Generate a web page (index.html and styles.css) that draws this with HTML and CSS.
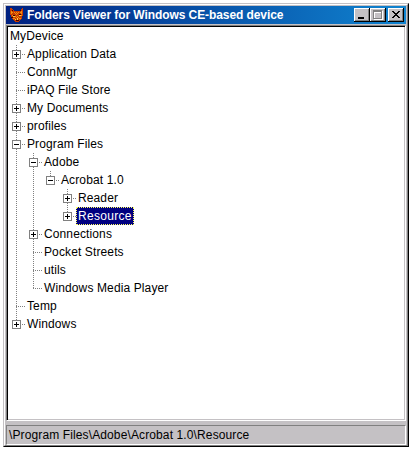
FILE: index.html
```html
<!DOCTYPE html>
<html lang="en">
<head>
<meta charset="utf-8">
<title>Folders Viewer for Windows CE-based device</title>
<link rel="stylesheet" href="styles.css">
</head>
<body>
<main class="window">
  <div class="frame">
    <header class="titlebar">
      <svg class="fox" width="16" height="16" viewBox="0 0 16 16" shape-rendering="crispEdges">
        <path fill="#c83c00" d="M1 1h1l3 3h5l3-3h1v7l-1 2v1l-3 4H6l-3-4H2V9L1 7z"/>
        <path fill="#f09010" d="M2 4h1v1h1v1H3v1H2zM12 4h1v3h-1V6h-1V5h1zM5 5h1v1H5zM7 5h1v1H7zM9 5h1v1H9zM6 6h1v1H6zM8 6h1v1H8zM7 7h1v1H7zM3 8h1v1H3zM12 8h1v1h-1zM6 9h1v1H6zM8 9h1v1H8zM7 10h1v1H7zM9 10h1v1H9zM4 11h2v1H4zM10 11h2v1h-2z"/>
        <path fill="#ffd040" d="M4 9h2v1H4zM10 8h2v1h-2zM8 11h1v2H8zM6 12h1v1H6z"/>
        <path fill="#400000" d="M4 8h2v1H4zM10 7h2v1h-2zM7 13h3v1H7zM2 10h2v1H2zM3 3h1v1H3zM11 3h1v1h-1z"/>
      </svg>
      <h1 class="title">Folders Viewer for Windows CE-based device</h1>
      <div class="controls">
        <button class="control" aria-label="Minimize"><svg width="16" height="14" shape-rendering="crispEdges"><path d="M4 9h6v2H4z"/></svg></button>
        <button class="control" aria-label="Maximize"><svg width="16" height="14" shape-rendering="crispEdges"><path fill="#fff" d="M4 3h9v9H4z"/><path fill="#808080" d="M3 2h9v9H3z"/><path fill="#fff" d="M4 4h7v6H4z"/><path fill="#c4c1c4" d="M5 5h6v5H5z"/></svg></button>
        <button class="control close" aria-label="Close"><svg width="16" height="14" shape-rendering="crispEdges"><path d="M4 3h2v1h1v1h2V4h1V3h2v1h-1v1h-1v1H9v1h1v1h1v1h1v1h-2V9H9V8H7v1H6v1H4V9h1V8h1V7h1V6H6V5H5V4H4z"/></svg></button>
      </div>
    </header>
    <section class="view">
      <div class="root">MyDevice</div>
      <ul class="tree">
        <li><div class="row"><i class="box plus"></i><span>Application Data</span></div></li>
        <li><div class="row leaf"><span>ConnMgr</span></div></li>
        <li><div class="row leaf"><span>iPAQ File Store</span></div></li>
        <li><div class="row"><i class="box plus"></i><span>My Documents</span></div></li>
        <li><div class="row"><i class="box plus"></i><span>profiles</span></div></li>
        <li><div class="row"><i class="box"></i><span>Program Files</span></div>
          <ul>
            <li><div class="row"><i class="box"></i><span>Adobe</span></div>
              <ul>
                <li><div class="row"><i class="box"></i><span>Acrobat 1.0</span></div>
                  <ul>
                    <li><div class="row"><i class="box plus"></i><span>Reader</span></div></li>
                    <li><div class="row"><i class="box plus"></i><span class="selected">Resource</span></div></li>
                  </ul>
                </li>
              </ul>
            </li>
            <li><div class="row"><i class="box plus"></i><span>Connections</span></div></li>
            <li><div class="row leaf"><span>Pocket Streets</span></div></li>
            <li><div class="row leaf"><span>utils</span></div></li>
            <li><div class="row leaf"><span>Windows Media Player</span></div></li>
          </ul>
        </li>
        <li><div class="row leaf"><span>Temp</span></div></li>
        <li><div class="row"><i class="box plus"></i><span>Windows</span></div></li>
      </ul>
    </section>
    <footer class="status">\Program Files\Adobe\Acrobat 1.0\Resource</footer>
  </div>
</main>
</body>
</html>
```

FILE: styles.css
```css
* { box-sizing: border-box; }
body {
  margin: 0;
  background: #fff;
  color: #000;
  font: 12px/18px "Liberation Sans", Arial, sans-serif;
  letter-spacing: 0.12px;
}
.window {
  width: 406px;
  height: 444px;
  margin: 3px;
  border: 1px solid;
  border-color: #c4c1c4 #000 #000 #c4c1c4;
  background: #c4c1c4;
}
.frame {
  height: 100%;
  display: flex;
  flex-direction: column;
  border: 1px solid;
  border-color: #fff #808080 #808080 #fff;
  padding: 1px;
}
.titlebar {
  height: 18px;
  flex: none;
  display: flex;
  align-items: center;
  padding: 0 2px 0 3px;
  background: linear-gradient(90deg, #002080, #1084d0);
  color: #fff;
}
.fox { flex: none; }
.title {
  flex: 1;
  margin: 0 0 0 2px;
  font-size: 12px;
  line-height: 18px;
  letter-spacing: -0.08px;
  white-space: nowrap;
}
.controls { display: flex; }
.control {
  width: 16px;
  height: 14px;
  padding: 0;
  border: 0;
  background: #c4c1c4;
  box-shadow: inset -1px -1px #000, inset 1px 1px #fff, inset -2px -2px #808080;
}
.control svg { display: block; }
.close { margin-left: 2px; }
.view {
  height: 396px;
  flex: none;
  background: #fff;
  border: 1px solid;
  border-color: #808080 #fff #fff #808080;
  box-shadow: inset 1px 1px #000, inset -1px -1px #c4c1c4;
  margin: 1px 0 4px;
  padding: 1px 0 0 1px;
}
.root { padding-left: 2px; }
ul { list-style: none; margin: 0; padding: 0; }
.tree { padding-left: 4px; }
ul ul { padding-left: 17px; }
li {
  background: repeating-linear-gradient(#808080 0 1px, transparent 1px 2px) 4px 0 / 1px 100% no-repeat;
}
li:last-child { background-size: 1px 9px; }
.row {
  height: 18px;
  display: flex;
  align-items: center;
  white-space: nowrap;
  background: repeating-linear-gradient(90deg, #808080 0 1px, transparent 1px 2px) 4px 9px / 9px 1px no-repeat;
}
.leaf { padding-left: 9px; }
.row span { margin-left: 4px; padding: 0 2px; line-height: 16px; }
.box {
  width: 9px;
  height: 9px;
  flex: none;
  margin-top: 1px;
  border: 1px solid #808080;
  background: linear-gradient(#000, #000) 1px 3px / 5px 1px no-repeat, #fff;
}
.plus {
  background: linear-gradient(#000, #000) 1px 3px / 5px 1px no-repeat,
    linear-gradient(#000, #000) 3px 1px / 1px 5px no-repeat, #fff;
}
.row .selected {
  width: 58px;
  height: 18px;
  line-height: 16px;
  padding: 0 0 0 1px;
  letter-spacing: 0.3px;
  color: #fff;
  background: #000080;
  border: 1px dotted #ffff60;
}
.status {
  flex: 1;
  padding-left: 2px;
  border-top: 1px solid #808080;
  border-left: 1px solid #808080;
  border-right: 1px solid #fff;
  border-bottom: 1px solid #fff;
  line-height: 18px;
}
```
